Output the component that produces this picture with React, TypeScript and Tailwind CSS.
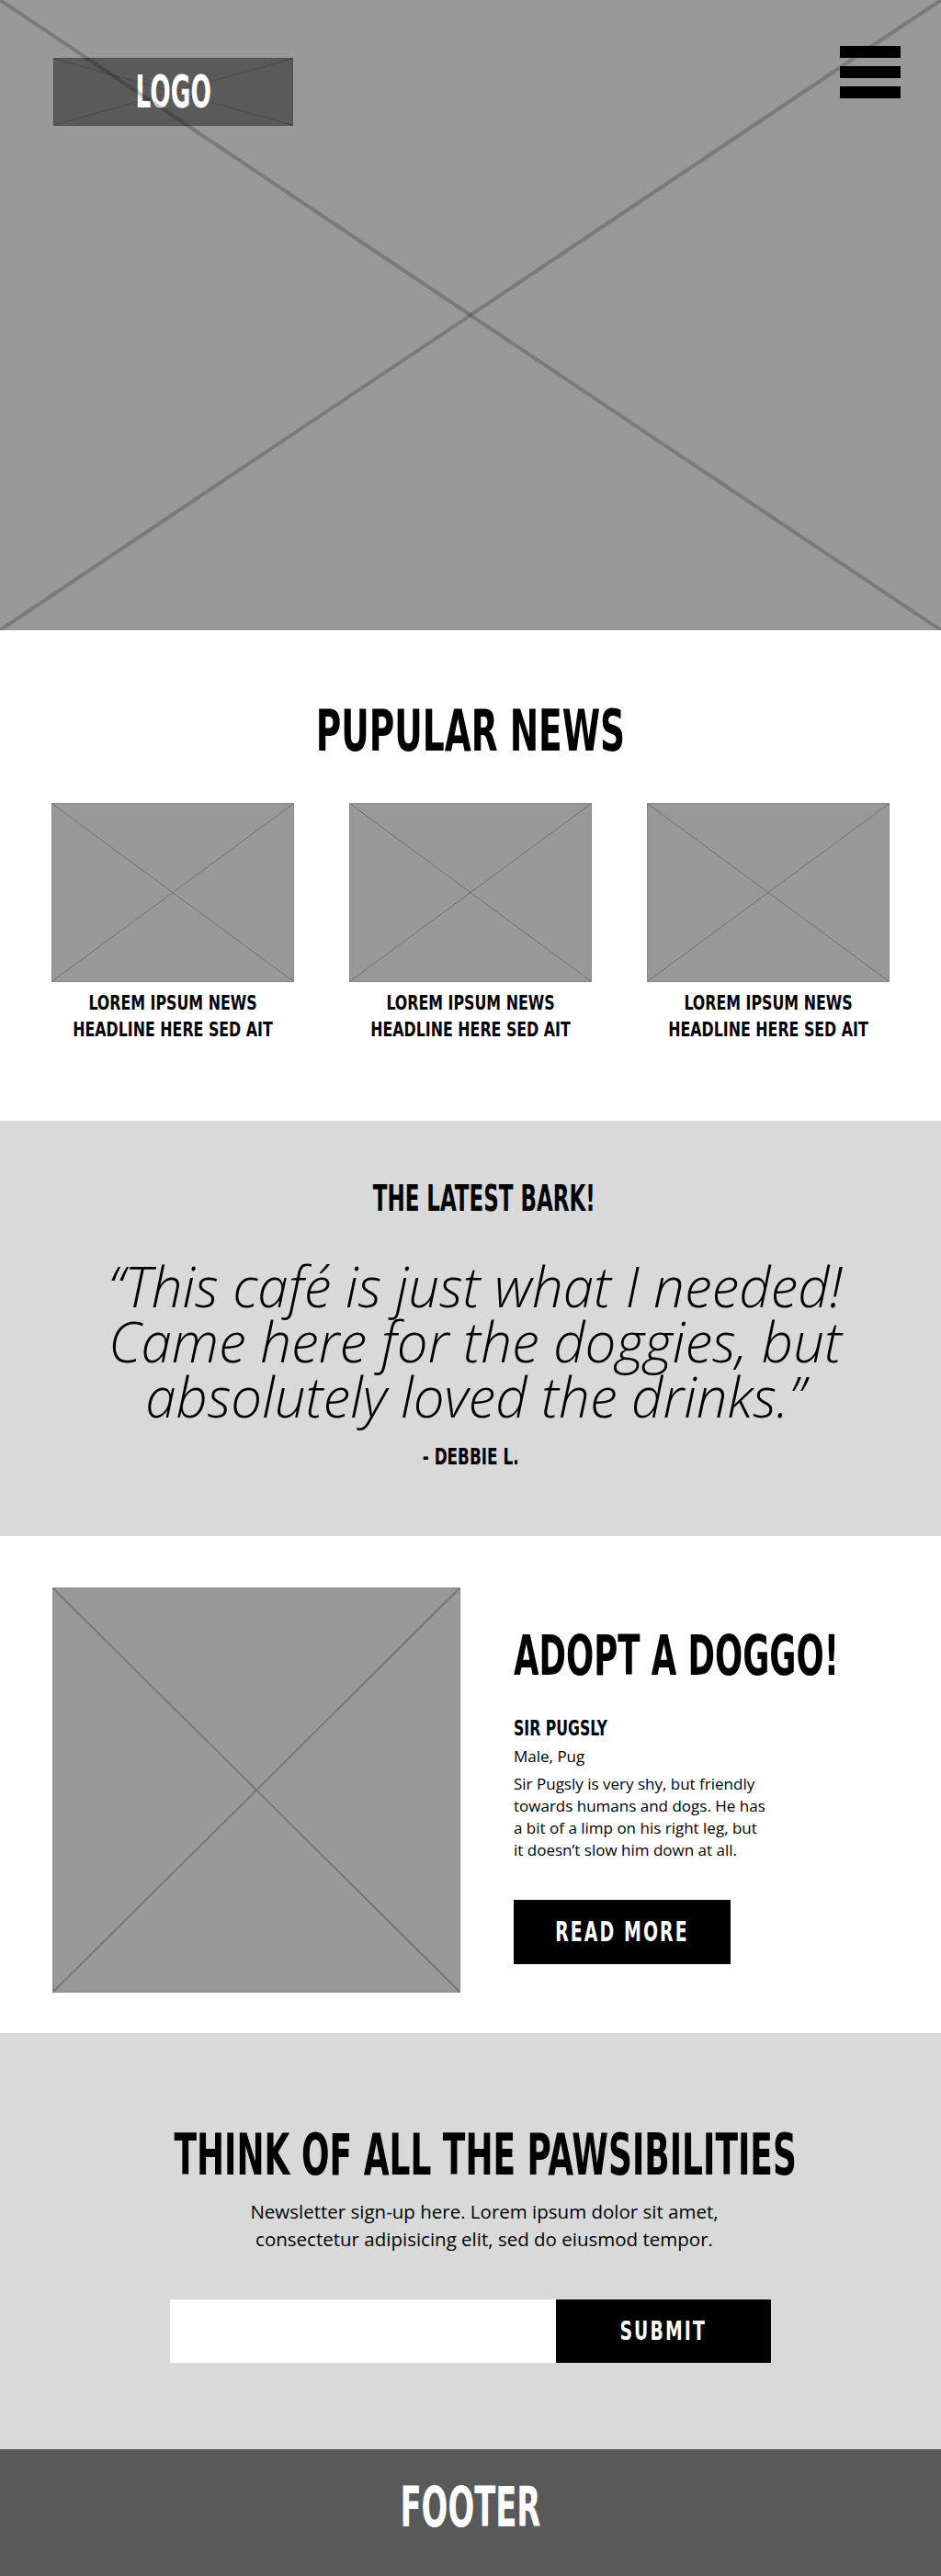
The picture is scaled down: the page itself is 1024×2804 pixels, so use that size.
const cond = "font-['Liberation_Sans_Narrow','DejaVu_Sans_Condensed',sans-serif] font-bold uppercase whitespace-nowrap";
const body = "font-['Open_Sans','Lato',sans-serif]";

function Cross({ color, width }: { color: string; width: number }) {
  return (
    <svg className="pointer-events-none absolute inset-0 h-full w-full" viewBox="0 0 100 100" preserveAspectRatio="none">
      <line x1="0" y1="0" x2="100" y2="100" stroke={color} strokeWidth={width} vectorEffect="non-scaling-stroke" />
      <line x1="100" y1="0" x2="0" y2="100" stroke={color} strokeWidth={width} vectorEffect="non-scaling-stroke" />
    </svg>
  );
}

const news = [1, 2, 3];
const quote = ["“This café is just what I needed!", "Came here for the doggies, but", "absolutely loved the drinks.”"];

export default function App() {
  return (
    <div className="w-[1024px] overflow-hidden bg-white text-black">
      {/* Hero */}
      <section className="relative h-[686px] bg-[#999999]">
        <div className="flex items-start justify-between pl-[58px] pr-[44px] pt-[50px]">
          <div className="relative mt-[13px] flex h-[74px] w-[261px] items-center justify-center border border-[#505050] bg-[#5a5a5a]">
            <Cross color="#484848" width={1} />
            <span className={`${cond} relative inline-block scale-x-[0.6] text-[49px] leading-none text-white`}>LOGO</span>
          </div>
          <div className="flex w-[66px] flex-col gap-[9px]">
            <div className="h-[13px] bg-black" />
            <div className="h-[13px] bg-black" />
            <div className="h-[13px] bg-black" />
          </div>
        </div>
        <Cross color="rgba(0,0,0,0.2)" width={4} />
      </section>

      {/* Popular news */}
      <section className="h-[534px] px-[56px] pt-[78px]">
        <h2 className={`${cond} flex justify-center text-[63px] leading-none`}>
          <span className="inline-block scale-x-[0.662]">PUPULAR NEWS</span>
        </h2>
        <div className="mt-[47px] grid grid-cols-3 gap-[60px]">
          {news.map((n) => (
            <div key={n}>
              <div className="relative h-[195px] border border-[#888888] bg-[#999999]">
                <Cross color="#6e6e6e" width={1} />
              </div>
              <p className={`${cond} -mx-[30px] mt-[8px] scale-x-[0.8] text-center text-[22px] leading-[29px]`}>
                LOREM IPSUM NEWS<br />HEADLINE HERE SED AIT
              </p>
            </div>
          ))}
        </div>
      </section>

      {/* Testimonial */}
      <section className="h-[452px] bg-[#d9d9d9] pt-[65px] text-center">
        <h3 className={`${cond} flex justify-center pl-[30px] text-[39px] leading-none`}>
          <span className="inline-block scale-x-[0.655]">THE LATEST BARK!</span>
        </h3>
        <div className={`${body} mt-[46px] pl-[10px] text-[60px] font-light italic leading-[60px]`}>
          {quote.map((line) => (
            <p key={line} className="h-[60px] whitespace-nowrap">{line}</p>
          ))}
        </div>
        <p className={`${cond} mt-[24px] flex justify-center text-[24px] leading-none`}>
          <span className="inline-block scale-x-[0.78]">- DEBBIE L.</span>
        </p>
      </section>

      {/* Adopt */}
      <section className="flex h-[541px] items-start gap-[58px] pl-[57px] pt-[56px]">
        <div className="relative h-[441px] w-[444px] shrink-0 border border-[#888888] bg-[#999999]">
          <Cross color="#777777" width={2} />
        </div>
        <div className="pt-[43px]">
          <h2 className={`${cond} origin-left scale-x-[0.647] text-[61px] leading-none`}>ADOPT A DOGGO!</h2>
          <h4 className={`${cond} mt-[38px] origin-left scale-x-[0.76] text-[23px] leading-none`}>SIR PUGSLY</h4>
          <p className={`${body} mt-[7px] text-[17px] leading-[24px]`}>Male, Pug</p>
          <p className={`${body} mt-[6px] text-[17px] leading-[24px]`}>
            Sir Pugsly is very shy, but friendly<br />
            towards humans and dogs. He has<br />
            a bit of a limp on his right leg, but<br />
            it doesn’t slow him down at all.
          </p>
          <button className="mt-[42px] flex h-[70px] w-[236px] items-center justify-center bg-black">
            <span className={`${cond} inline-block scale-x-[0.7] text-[30px] leading-none tracking-[3px] text-white`}>READ MORE</span>
          </button>
        </div>
      </section>

      {/* Newsletter */}
      <section className="h-[453px] overflow-hidden bg-[#d9d9d9] pt-[102px] text-center">
        <h2 className={`${cond} flex justify-center pl-[32px] text-[62px] leading-none`}>
          <span className="inline-block shrink-0 scale-x-[0.645]">THINK OF ALL THE PAWSIBILITIES</span>
        </h2>
        <p className={`${body} mt-[15px] pl-[30px] text-[20.5px] leading-[30px]`}>
          Newsletter sign-up here. Lorem ipsum dolor sit amet,<br />
          consectetur adipisicing elit, sed do eiusmod tempor.
        </p>
        <form className="mx-auto mt-[51px] flex h-[69px] w-[654px]">
          <input type="email" className="h-full w-[420px] bg-white px-4 outline-none" />
          <button type="button" className="flex h-full flex-1 items-center justify-center bg-black">
            <span className={`${cond} inline-block scale-x-[0.72] text-[29px] leading-none tracking-[3px] text-white`}>SUBMIT</span>
          </button>
        </form>
      </section>

      {/* Footer */}
      <footer className="h-[138px] bg-[#595959] pt-[33px] text-center">
        <span className={`${cond} inline-block scale-x-[0.627] text-[60px] leading-none text-white`}>FOOTER</span>
      </footer>
    </div>
  );
}
